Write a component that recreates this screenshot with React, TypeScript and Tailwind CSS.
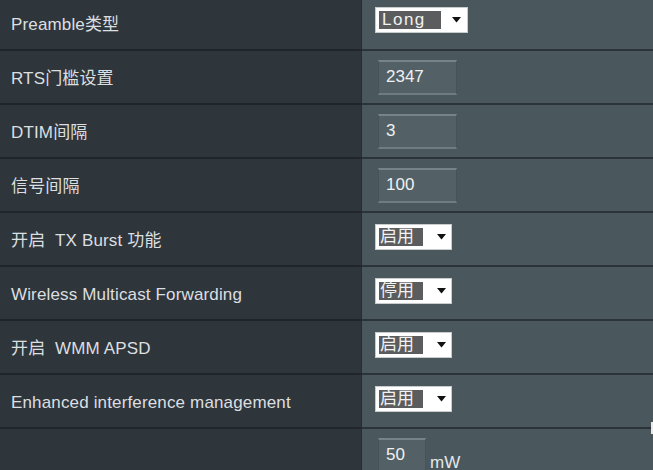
import React from "react";

const font = { fontFamily: '"Liberation Sans", Arial, "Noto Sans CJK SC", sans-serif' };

function Arrow() {
  return (
    <svg width="9" height="6" viewBox="0 0 9 6" className="block">
      <path d="M0 0 L9 0 L4.5 5.5 Z" fill="#111" />
    </svg>
  );
}

function Select({ value, wide }: { value: string; wide?: boolean }) {
  return (
    <div
      className={
        "flex items-center bg-white border border-[#c8cccd] pl-[3px] " +
        (wide ? "w-[93px] h-[26px] -mt-[6px]" : "w-[77px] h-[26px] -mt-[4px]")
      }
    >
      <div
        className={
          "h-[18px] bg-[#5a5c5d] text-[#f2f2f2] text-[17px] leading-[18px] flex items-center " +
          (wide ? "w-[62px] pl-[3px] tracking-[1.5px]" : "w-[44px] pl-[1px]")
        }
      >
        {value}
      </div>
      <div className={wide ? "ml-[11px]" : "ml-[14px]"}>
        <Arrow />
      </div>
    </div>
  );
}

function Input({ value, small }: { value: string; small?: boolean }) {
  return (
    <div
      className={
        "ml-[3px] h-[35px] bg-[#536167] border-t-2 border-b-2 border-t-[#76848a] border-b-[#6f7d83] border-x border-x-[#465459] flex items-center pl-[7px] text-[17px] text-[#eef1f2] " +
        (small ? "w-[48px]" : "w-[79px]")
      }
    >
      {value}
    </div>
  );
}

type Row = { label: string; ctrl: React.ReactNode };

const rows: Row[] = [
  { label: "Preamble类型", ctrl: <Select value="Long" wide /> },
  { label: "RTS门槛设置", ctrl: <Input value="2347" /> },
  { label: "DTIM间隔", ctrl: <Input value="3" /> },
  { label: "信号间隔", ctrl: <Input value="100" /> },
  { label: "开启  TX Burst 功能", ctrl: <Select value="启用" /> },
  { label: "Wireless Multicast Forwarding", ctrl: <Select value="停用" /> },
  { label: "开启  WMM APSD", ctrl: <Select value="启用" /> },
  { label: "Enhanced interference management", ctrl: <Select value="启用" /> },
  {
    label: "",
    ctrl: (
      <div className="flex items-end">
        <Input value="50" small />
        <span className="ml-[4px] mb-[2px] text-[17px] leading-[17px] text-[#e4e8e9]">mW</span>
      </div>
    ),
  },
];

export default function App() {
  return (
    <div className="relative w-[653px] h-[470px] overflow-hidden bg-[#4a575d]" style={font}>
      <div className="-mt-[3px] flex flex-col">
        {rows.map((r, i) => (
          <div key={i} className="flex h-[54px] shrink-0">
            <div className="w-[361px] bg-[#2f363b] border-b-2 border-b-[#1f2528] flex items-center pl-[11px] pt-[3px] text-[17px] tracking-[0.15px] text-[#dcdfe0] whitespace-pre">
              {r.label}
            </div>
            <div className="w-[1px] bg-[#262d31]" />
            <div className="flex-1 bg-[#4a575d] border-b-2 border-b-[#2a3337] flex items-center pl-[13px]">
              {r.ctrl}
            </div>
          </div>
        ))}
      </div>
      <div className="absolute right-0 top-[422px] w-[2px] h-[12px] bg-[#e8eaea]" />
    </div>
  );
}
